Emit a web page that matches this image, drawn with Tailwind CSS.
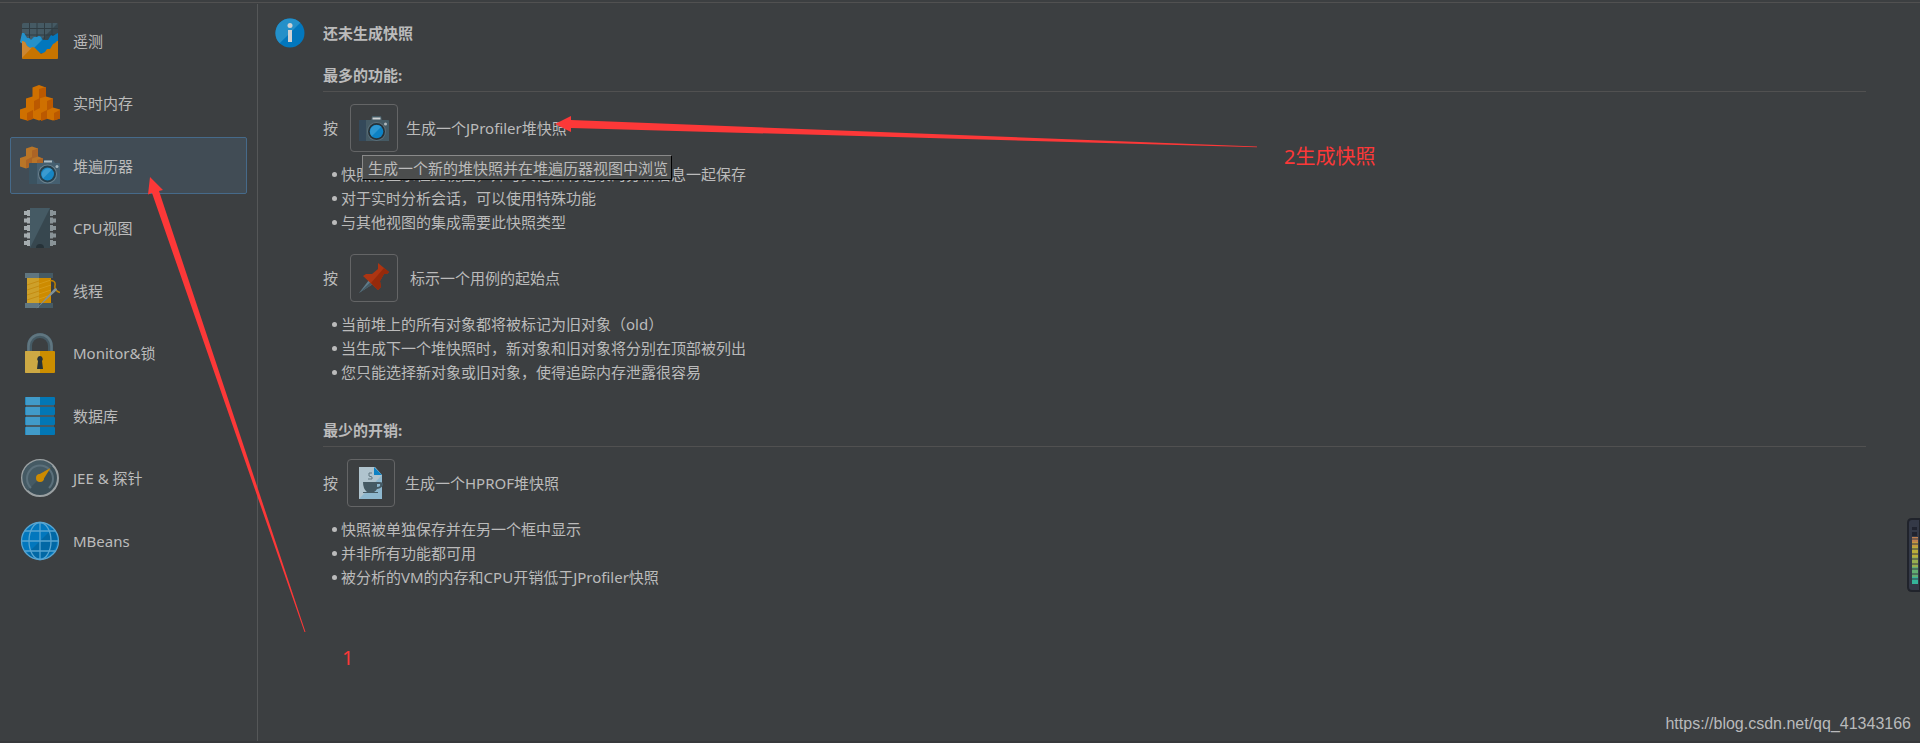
<!DOCTYPE html>
<html lang="zh-CN">
<head>
<meta charset="utf-8">
<title>JProfiler</title>
<script src="https://cdn.jsdelivr.net/npm/@tailwindcss/browser@4"></script>
</head>
<body class="relative min-h-screen flex flex-col overflow-x-hidden bg-[#3c3f41] text-[#bbbbbb] text-[15px] leading-6 font-['Noto_Sans','Noto_Sans_CJK_SC',sans-serif] border-b-2 border-[#37393c]">
<div class="h-[3px] border-b border-[#515151] mb-px"></div>
<div class="flex flex-1">
  <nav class="w-[258px] shrink-0 border-r border-[#555758] pt-2 px-[10px]">
    <ul class="flex flex-col justify-between h-[557px]">
      <li><button class="flex items-center w-full h-[57px] pl-[10px] gap-[13px] text-left">
        <svg class="size-10" viewBox="0 0 40 40"><rect x="2" y="2" width="36" height="36" rx="1.500" fill="#455a64"/><path d="M38 2v20H18z" fill="#37474f"/><path d="M2 7.500h36M2 14h36M9.500 2v16M17 2v16M24.500 2v16M32 2v16" stroke="#303c42" stroke-width="1"/><path d="M2 12l2 0 3 5 2 0 2 2 3-3 3 0 2-1 2 1 2 3 5 0 3-5 2 1 3-2 2-1v20H2z" fill="#0277bd"/><path d="M2 12l2 0 3 5 2 0 2 2 3-3 3 0 2-1 2 1 1 3-11 11-4-4-7-5z" fill="#2591c9"/><path d="M2 20l3 1 2 4 3 2 3-1 2 1 3 3 3 3 4-2 2-3 3 0 3-5 2-1 2-2h1v17a1 1 0 0 1-1 1H3a1 1 0 0 1-1-1z" fill="#c77400"/><path d="M2 20l3 1 2 4 3 2 2-.500L2 37z" fill="#cd8731"/></svg>遥测</button></li>
      <li><button class="flex items-center w-full h-[57px] pl-[10px] gap-[13px] text-left">
        <svg class="size-10" viewBox="0 0 40 40"><path d="M19 2l7 2.500v9l7 2v9l7 2v9l-7 2-7-2-7 2-6-2-6 2-7-2v-9l6-2v-9l6.500-2v-9z" fill="#cf7000"/><path d="M19 6l7-2v9.500l-7 2zM14 18l6-3v10l-6 3zM27 18l6-2.500v9l-6 3zM7 30l6-3v9l-6 2zM21 30l6-3v9l-6 2zM34 30l6-3v8.500l-6 2z" fill="#bb5900"/></svg>实时内存</button></li>
      <li><button aria-current="page" class="flex items-center w-full h-[57px] pl-[9px] gap-[13px] text-left rounded-xs border border-[#466a8a] bg-[#414c55]">
        <svg class="size-10" viewBox="0 0 40 40"><path d="M12 .5l6 2v8l5 2v7l-7 3-5-2-5 2-6-2V12l6-2V2.500z" fill="#b97527"/><path d="M12 4.500l6-2v8l-6 2zM6 14l6-3v9l-6 2zM17 14l6-2v7l-6 2z" fill="#ac6425"/><path d="M10 17h13l2-3h8l2 3h4q1 0 1 1v20H9V18z" fill="#455f70"/><path d="M9 18q0-1 1-1h7v21H9z" fill="#3b5361"/><path d="M24 14.500h8v2h-8z" fill="#b0bec5"/><circle cx="27.500" cy="28" r="9.500" fill="#6d828d"/><circle cx="27.500" cy="28" r="8.500" fill="#27404d"/><circle cx="27.500" cy="28" r="6.500" fill="#1786c4"/><path d="M23 32.500a6.500 6.500 0 0 1 9-9z" fill="#3b9bd0"/><circle cx="37" cy="20.500" r="1.500" fill="#a5b5bd"/></svg>堆遍历器</button></li>
      <li><button class="flex items-center w-full h-[57px] pl-[10px] gap-[13px] text-left">
        <svg class="size-10" viewBox="0 0 40 40"><path d="M4 3h3V2h3v6H7V7H4zM4 10.500h3v-1h3v6H7v-1H4zM4 18h3v-1h3v6H7v-1H4zM4 25.500h3v-1h3v6H7v-1H4zM4 33h3v-1h3v6H7v-1H4z" fill="#a5acaf"/><path d="M36 3h-3V2h-3v6h3V7h3zM36 10.500h-3v-1h-3v6h3v-1h3zM36 18h-3v-1h-3v6h3v-1h3zM36 25.500h-3v-1h-3v6h3v-1h3zM36 33h-3v-1h-3v6h3v-1h3z" fill="#899397"/><rect x="10" width="20" height="40" fill="#455a64"/><path d="M30 0v40H10z" fill="#37474f"/><path d="M16 40a4 4 0 0 1 8 0z" fill="#263238"/></svg>CPU视图</button></li>
      <li><button class="flex items-center w-full h-[57px] pl-[10px] gap-[13px] text-left">
        <svg class="size-10" viewBox="0 0 40 40"><path d="M5 2h28v5H5zM5 32h28v5H5z" fill="#455a64"/><path d="M5 2h14v5H5zM5 32h14v5H5z" fill="#607680"/><path d="M7 7h24v25H7z" fill="#cd8b00"/><path d="M7 7h12v25H7z" fill="#cda02a"/><path d="M7 14l12-4M7 19l12-4M7 24l12-4M7 29l12-4" stroke="#c58c12"/><path d="M19 13l12-4M19 18l12-4M19 23l12-4M19 28l12-4" stroke="#d59a18"/><path d="M30 9.500q6 0 5 5t5 7" fill="none" stroke="#bf8100" stroke-width="1.500"/><path d="M16 38L34 18q3-2 3 1z" fill="#81919a"/></svg>线程</button></li>
      <li><button class="flex items-center w-full h-[57px] pl-[10px] gap-[13px] text-left">
        <svg class="size-10" viewBox="0 0 40 40"><path d="M9.500 19v-6a10.500 10.500 0 0 1 21 0v6" fill="none" stroke="#455a64" stroke-width="5"/><path d="M8.500 19v-6a11.500 11.500 0 0 1 23 0v6" fill="none" stroke="#607680" stroke-width="2.500"/><rect x="5" y="18" width="30" height="22" rx="1" fill="#cc8e00"/><path d="M6 18h14v22H6q-1 0-1-1V19q0-1 1-1z" fill="#cda944"/><path d="M20 23a3 3 0 0 1 2 5l1 8h-6l1-8a3 3 0 0 1 2-5z" fill="#263238"/></svg>Monitor&amp;锁</button></li>
      <li><button class="flex items-center w-full h-[57px] pl-[10px] gap-[13px] text-left">
        <svg class="size-10" viewBox="0 0 40 40"><path d="M6 7h28v28H6z" fill="#455a64"/><g fill="#0277b5"><rect x="5" y="1" width="30" height="8" rx="1"/><rect x="5" y="11" width="30" height="8" rx="1"/><rect x="5" y="21" width="30" height="8" rx="1"/><rect x="5" y="31" width="30" height="8" rx="1"/></g><path d="M5.500 1H20v8H5.500zM5.500 11H20v8H5.500zM5.500 21H20v8H5.500zM5.500 31H20v8H5.500z" fill="#419bc9"/></svg>数据库</button></li>
      <li><button class="flex items-center w-full h-[57px] pl-[10px] gap-[13px] text-left">
        <svg class="size-10" viewBox="0 0 40 40"><circle cx="20" cy="20" r="18" fill="#3b4e57" stroke="#9aa0a2" stroke-width="2"/><path d="M7.500 32.500A17.500 17.500 0 0 1 32.500 7.500z" fill="#455a64"/><path d="M11 30a13 13 0 1 1 18 0" fill="none" stroke="#5b707b" stroke-width="2"/><path d="M18 17L30.500 10 23 22z" fill="#cd8b00"/><circle cx="20" cy="20" r="4" fill="#cd8b00"/></svg>JEE &amp; 探针</button></li>
      <li><button class="flex items-center w-full h-[57px] pl-[10px] gap-[13px] text-left">
        <svg class="size-10" viewBox="0 0 40 40"><circle cx="20" cy="20" r="18.500" fill="#0277bd"/><path d="M33 7A18.500 18.500 0 0 1 7 33z" fill="#0268a5"/><g fill="none" stroke="#58a5d1" stroke-width="1.300"><circle cx="20" cy="20" r="18.500"/><ellipse cx="20" cy="20" rx="11" ry="18.500"/><path d="M20 1.500v37M1.500 20h37M5 10h30M5 30h30"/></g></svg>MBeans</button></li>
    </ul>
  </nav>
  <main class="flex flex-1 gap-[18px] pl-[17px] pr-[54px] pt-[14px]">
    <svg class="size-[30px] shrink-0" viewBox="0 0 30 30"><circle cx="15" cy="15" r="14.500" fill="#0277bd"/><path d="M4.700 25.300A14.500 14.500 0 0 1 25.300 4.700z" fill="#2490c9"/><circle cx="15" cy="7.500" r="2.500" fill="#d0d2d3"/><path d="M13 12h4v12h-4z" fill="#d0d2d3"/></svg>
    <div class="flex-1">
      <h1 class="font-bold mt-[3px]">还未生成快照</h1>
      <section class="mt-[18px]">
        <h2 class="font-bold border-b border-[#515151] h-[29px]">最多的功能:</h2>
        <div class="flex items-center mt-3"><span class="w-[27px]">按</span>
          <button aria-label="生成一个JProfiler堆快照" class="size-12 flex items-center justify-center rounded-sm border border-[#646566]"><svg class="size-8" viewBox="0 0 32 32"><path d="M2 8h11l1-4h9l1 4h6q1 0 1 1v20H1V9z" fill="#455a64"/><path d="M1 9q0-1 1-1h6v21H1z" fill="#34495a"/><path d="M14.500 5.500h8v2h-8z" fill="#cfd2d3"/><circle cx="18.500" cy="19.500" r="9.500" fill="#5b6f79"/><circle cx="18.500" cy="19.500" r="8.500" fill="#263238"/><circle cx="18.500" cy="19.500" r="6.800" fill="#0d82c4"/><path d="M13.700 24.300a6.800 6.800 0 0 1 9.600-9.600z" fill="#2e97d0"/><circle cx="27.500" cy="12" r="1.500" fill="#b0b8bc"/></svg></button>
          <span class="ml-2">生成一个JProfiler堆快照</span></div>
        <div class="relative mt-[10px]">
          <ul class="pl-[9px]">
            <li class="flex items-center gap-1"><span class="size-[5px] rounded-full bg-[#bbbbbb]"></span>快照将显示在此视图，并与其他所有记录的分析信息一起保存</li>
            <li class="flex items-center gap-1"><span class="size-[5px] rounded-full bg-[#bbbbbb]"></span>对于实时分析会话，可以使用特殊功能</li>
            <li class="flex items-center gap-1"><span class="size-[5px] rounded-full bg-[#bbbbbb]"></span>与其他视图的集成需要此快照类型</li>
          </ul>
          <div role="tooltip" class="absolute left-[39px] -top-[7px] h-[25px] pl-[5px] pr-[3px] leading-6 whitespace-nowrap bg-[#4b4d4d] border border-t-[#8a8a8a] border-l-[#8a8a8a] border-b-black border-r-black">生成一个新的堆快照并在堆遍历器视图中浏览</div>
        </div>
        <div class="flex items-center mt-5"><span class="w-[27px]">按</span>
          <button aria-label="标示一个用例的起始点" class="size-12 flex items-center justify-center rounded-sm border border-[#646566]"><svg class="size-8" viewBox="0 0 32 32"><path d="M1 31L11 18l4 4z" fill="#607d8b"/><path d="M1 31l11.500-11 2.500 2z" fill="#455a64"/><path d="M20 1l11 9-2 2-3 0-4 7 1 6-3 3L5 14l3-2 6 0 6-5z" fill="#ad3512"/><path d="M26 6l5 4-2 2-3 0-4 7 1 6-3 3-7-7z" fill="#962a0b"/></svg></button>
          <span class="ml-3">标示一个用例的起始点</span></div>
        <ul class="pl-[9px] mt-[10px]">
          <li class="flex items-center gap-1"><span class="size-[5px] rounded-full bg-[#bbbbbb]"></span>当前堆上的所有对象都将被标记为旧对象（old）</li>
          <li class="flex items-center gap-1"><span class="size-[5px] rounded-full bg-[#bbbbbb]"></span>当生成下一个堆快照时，新对象和旧对象将分别在顶部被列出</li>
          <li class="flex items-center gap-1"><span class="size-[5px] rounded-full bg-[#bbbbbb]"></span>您只能选择新对象或旧对象，使得追踪内存泄露很容易</li>
        </ul>
      </section>
      <section class="mt-[34px]">
        <h2 class="font-bold border-b border-[#515151] h-[29px]">最少的开销:</h2>
        <div class="flex items-center mt-3"><span class="w-6">按</span>
          <button aria-label="生成一个HPROF堆快照" class="size-12 flex items-center justify-center rounded-sm border border-[#646566]"><svg class="size-8" viewBox="0 0 32 32"><path d="M4 0h16l7 8v24H4z" fill="#b0c4ce"/><path d="M27 8v24H4z" fill="#8eb8cf"/><path d="M19 0l8 8h-8z" fill="#0d82c4"/><path d="M8 15h16q5 0 4 3t-6 4q-1 2-3 3h-7q-4-3-4-10zM8 25h15v1H8zM22 17v3q4 0 3-3z" fill="#455a64" fill-rule="evenodd"/><path d="M17 6h-3v3l3 1v2h-4" fill="none" stroke="#607680"/></svg></button>
          <span class="ml-[10px]">生成一个HPROF堆快照</span></div>
        <ul class="pl-[9px] mt-[10px]">
          <li class="flex items-center gap-1"><span class="size-[5px] rounded-full bg-[#bbbbbb]"></span>快照被单独保存并在另一个框中显示</li>
          <li class="flex items-center gap-1"><span class="size-[5px] rounded-full bg-[#bbbbbb]"></span>并非所有功能都可用</li>
          <li class="flex items-center gap-1"><span class="size-[5px] rounded-full bg-[#bbbbbb]"></span>被分析的VM的内存和CPU开销低于JProfiler快照</li>
        </ul>
      </section>
    </div>
  </main>
</div>
<svg class="absolute left-0 top-0 w-[1300px] h-[700px] pointer-events-none" viewBox="0 0 1300 700" fill="#fc3838"><path d="M150 177L163 190l-4 1L305.500 632h-1L152 193l-4 1.500z"/><path d="M555 124l16-8v4L1257 146.500v.8L571 128v4z"/></svg>
<p class="absolute left-[1284px] top-[143px] text-xl leading-7 text-[#fc3838]">2生成快照</p>
<p class="absolute left-[342px] top-[644px] text-xl leading-7 text-[#fc3838]">1</p>
<p class="absolute right-[9px] bottom-[5px] text-base leading-6 text-[#b9babb] font-['Liberation_Sans',sans-serif]">https://blog.csdn.net/qq_41343166</p>
<svg class="absolute right-0 top-[518px] w-[13px] h-[74px]" viewBox="0 0 13 74"><path d="M13 1H5Q1 1 1 5v64q0 4 4 4h8z" fill="#343947" stroke="#20232b" stroke-width="2"/><path d="M5 9h5v3H5zM5 14h5v4H5z" fill="#20232f"/><path d="M5 19h6v5H5z" fill="#c0804f"/><path d="M5 24h6v5H5z" fill="#c49a40"/><path d="M5 29h6v10H5z" fill="#b9ad3a"/><path d="M5 39h6v10H5z" fill="#97ad50"/><path d="M5 49h6v10H5z" fill="#62ad72"/><path d="M5 59h6v7H5z" fill="#35b49a"/><path d="M5 21h6M5 26h6M5 31h6M5 36h6M5 41h6M5 46h6M5 51h6M5 56h6M5 61h6" stroke="#343947" stroke-width="1"/></svg>
</body>
</html>
